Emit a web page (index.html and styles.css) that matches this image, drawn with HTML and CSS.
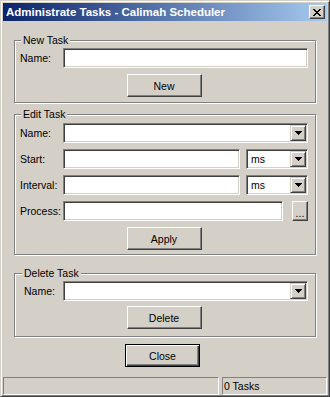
FILE: index.html
```html
<!DOCTYPE html>
<html lang="en">
<head>
  <meta charset="UTF-8" />
  <title>Administrate Tasks - Calimah Scheduler</title>
  <link rel="stylesheet" href="styles.css">
</head>
<body>
  <div class="window">
    <div class="titlebar">
      <span class="title">Administrate Tasks - Calimah Scheduler</span>
      <span class="caption-btn">
        <svg width="8" height="7" viewBox="0 0 8 7" shape-rendering="crispEdges">
          <rect x="0" y="0" width="2" height="1"/><rect x="6" y="0" width="2" height="1"/>
          <rect x="1" y="1" width="2" height="1"/><rect x="5" y="1" width="2" height="1"/>
          <rect x="2" y="2" width="4" height="1"/>
          <rect x="3" y="3" width="2" height="1"/>
          <rect x="2" y="4" width="4" height="1"/>
          <rect x="1" y="5" width="2" height="1"/><rect x="5" y="5" width="2" height="1"/>
          <rect x="0" y="6" width="2" height="1"/><rect x="6" y="6" width="2" height="1"/>
        </svg>
      </span>
    </div>

    <div class="client">
      <div class="group group-new">
        <span class="group-label">New Task</span>
        <div class="row">
          <label>Name:</label>
          <div class="field"></div>
        </div>
        <div class="actions"><button class="btn">New</button></div>
      </div>

      <div class="group group-edit">
        <span class="group-label">Edit Task</span>
        <div class="row">
          <label>Name:</label>
          <div class="field combo"><span class="drop"><svg width="7" height="4" viewBox="0 0 7 4" shape-rendering="crispEdges"><rect x="0" y="0" width="7" height="1"/><rect x="1" y="1" width="5" height="1"/><rect x="2" y="2" width="3" height="1"/><rect x="3" y="3" width="1" height="1"/></svg></span></div>
        </div>
        <div class="row">
          <label>Start:</label>
          <div class="pair">
            <div class="field"></div>
            <div class="field combo unit"><span class="value">ms</span><span class="drop"><svg width="7" height="4" viewBox="0 0 7 4" shape-rendering="crispEdges"><rect x="0" y="0" width="7" height="1"/><rect x="1" y="1" width="5" height="1"/><rect x="2" y="2" width="3" height="1"/><rect x="3" y="3" width="1" height="1"/></svg></span></div>
          </div>
        </div>
        <div class="row">
          <label>Interval:</label>
          <div class="pair">
            <div class="field"></div>
            <div class="field combo unit"><span class="value">ms</span><span class="drop"><svg width="7" height="4" viewBox="0 0 7 4" shape-rendering="crispEdges"><rect x="0" y="0" width="7" height="1"/><rect x="1" y="1" width="5" height="1"/><rect x="2" y="2" width="3" height="1"/><rect x="3" y="3" width="1" height="1"/></svg></span></div>
          </div>
        </div>
        <div class="row">
          <label>Process:</label>
          <div class="pair pair-browse">
            <div class="field"></div>
            <button class="btn btn-browse">...</button>
          </div>
        </div>
        <div class="actions"><button class="btn">Apply</button></div>
      </div>

      <div class="group group-delete">
        <span class="group-label">Delete Task</span>
        <div class="row">
          <label>Name:</label>
          <div class="field combo"><span class="drop"><svg width="7" height="4" viewBox="0 0 7 4" shape-rendering="crispEdges"><rect x="0" y="0" width="7" height="1"/><rect x="1" y="1" width="5" height="1"/><rect x="2" y="2" width="3" height="1"/><rect x="3" y="3" width="1" height="1"/></svg></span></div>
        </div>
        <div class="actions"><button class="btn">Delete</button></div>
      </div>

      <div class="close-row"><button class="btn btn-default">Close</button></div>
    </div>

    <div class="statusbar">
      <div class="panel panel-main"></div>
      <div class="panel panel-count">0 Tasks</div>
    </div>
  </div>
</body>
</html>
```

FILE: styles.css
```css
* {
  box-sizing: border-box;
}

body {
  margin: 0;
  font-family: "Liberation Sans", Arial, sans-serif;
  font-size: 10.5px;
  color: #000000;
  background-color: #d4d0c8;
}

.window {
  width: 330px;
  height: 397px;
  display: flex;
  flex-direction: column;
  padding: 2px 2px 1px 2px;
  background-color: #d4d0c8;
  border: 1px solid;
  border-color: #d4d0c8 #404040 #404040 #d4d0c8;
  box-shadow: inset 1px 1px #ffffff, inset -1px -1px #808080;
}

.titlebar {
  height: 18px;
  display: flex;
  align-items: center;
  justify-content: space-between;
  padding: 0 2px 0 3px;
  background: linear-gradient(to right, #0a246a, #a6caf0);
}

.title {
  color: #ffffff;
  font-weight: bold;
  font-size: 11.5px;
}

.caption-btn {
  width: 16px;
  height: 14px;
  display: flex;
  align-items: center;
  justify-content: center;
  padding-top: 1px;
  background-color: #d4d0c8;
  border: 1px solid;
  border-color: #ffffff #404040 #404040 #ffffff;
  box-shadow: inset -1px -1px #808080;
}

.client {
  display: flex;
  flex-direction: column;
  padding: 0 11px 0 11px;
}

.group {
  position: relative;
  display: flex;
  flex-direction: column;
  border: 1px solid #808080;
  box-shadow: inset 1px 1px #ffffff, 1px 1px #ffffff;
  padding: 7px 7px 5px 5px;
  gap: 6px;
}

.group-new {
  margin-top: 19px;
}

.group-edit {
  margin-top: 11px;
  padding-top: 8px;
  padding-bottom: 4px;
}

.group-delete {
  margin-top: 18px;
  padding-bottom: 7px;
  gap: 5px;
}

.group-label {
  position: absolute;
  top: -7px;
  left: 6px;
  padding: 0 2px;
  line-height: 12px;
  background-color: #d4d0c8;
}

.group-delete .group-label {
  left: 7px;
}

.row {
  display: grid;
  grid-template-columns: 43px 1fr;
  align-items: center;
  height: 20px;
}

.group-delete .row {
  grid-template-columns: 43px 1fr;
}

.group-delete .row label {
  padding-left: 4px;
}

.field {
  height: 20px;
  background-color: #ffffff;
  border: 1px solid;
  border-color: #808080 #ffffff #ffffff #808080;
  box-shadow: inset 1px 1px #404040, inset -1px -1px #d4d0c8;
}

.combo {
  display: flex;
  justify-content: space-between;
  align-items: stretch;
  padding: 1px;
}

.value {
  padding: 2px 0 0 3px;
}

.drop {
  width: 16px;
  margin-left: auto;
  display: flex;
  align-items: center;
  justify-content: center;
  background-color: #d4d0c8;
  border: 1px solid;
  border-color: #d4d0c8 #404040 #404040 #d4d0c8;
  box-shadow: inset 1px 1px #ffffff, inset -1px -1px #808080;
}

.pair {
  display: flex;
  gap: 6px;
}

.pair .field {
  flex: 1;
}

.pair .unit {
  flex: 0 0 62px;
}

.pair-browse {
  gap: 9px;
}

.actions {
  display: flex;
  justify-content: center;
}

.btn {
  width: 75px;
  height: 23px;
  padding: 0;
  font-family: inherit;
  font-size: inherit;
  color: #000000;
  background-color: #d4d0c8;
  border: 1px solid;
  border-color: #ffffff #404040 #404040 #ffffff;
  box-shadow: inset -1px -1px #808080;
}

.btn-browse {
  width: 16px;
  height: 20px;
  flex: 0 0 16px;
  padding-top: 4px;
}

.btn-default {
  border: 1px solid #000000;
  box-shadow: inset 1px 1px #ffffff, inset -1px -1px #404040, inset -2px -2px #808080;
}

.close-row {
  display: flex;
  margin-top: 7px;
  padding-left: 111px;
}

.statusbar {
  margin-top: auto;
  display: flex;
  gap: 3px;
  height: 18px;
}

.panel {
  height: 18px;
  padding: 2px 0 0 1px;
  border: 1px solid;
  border-color: #808080 #ffffff #ffffff #808080;
}

.panel-main {
  width: 216px;
}

.panel-count {
  flex: 1;
}
```
